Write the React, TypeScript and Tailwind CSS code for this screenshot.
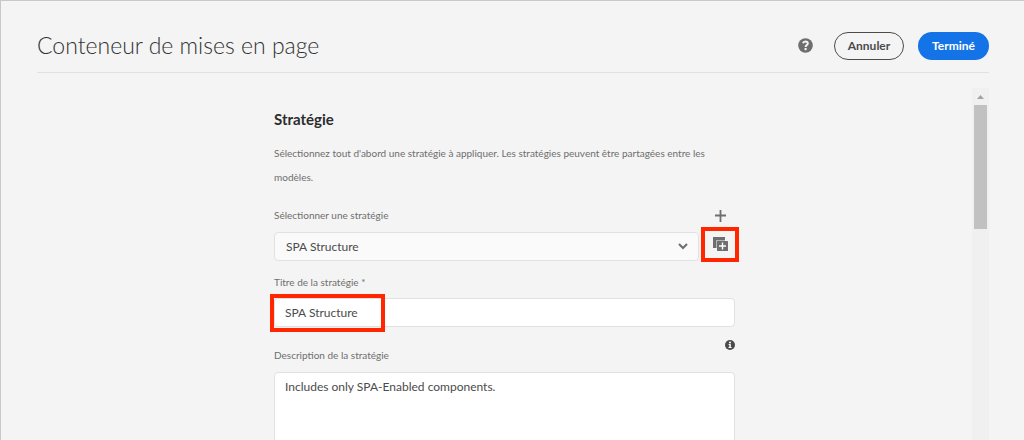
import React from "react";

function HelpIcon() {
  return (
    <svg width="15" height="15" viewBox="0 0 15 15" aria-hidden="true">
      <circle cx="7.5" cy="7.5" r="7.3" fill="#6e6e6e" />
      <path
        d="M5 5.300C5.300 4.100 6.300 3.500 7.500 3.500c1.400 0 2.300.8 2.300 1.900 0 1.700-2.200 1.700-2.200 3.700"
        fill="none"
        stroke="#f4f4f4"
        strokeWidth="2"
      />
      <rect x="6.500" y="10" width="2.200" height="2.200" rx=".6" fill="#f4f4f4" />
    </svg>
  );
}

function InfoIcon() {
  return (
    <svg width="10" height="10" viewBox="0 0 10 10" aria-hidden="true">
      <circle cx="5" cy="5" r="5" fill="#4b4b4b" />
      <circle cx="5" cy="2.400" r="1" fill="#fff" />
      <path d="M3.600 4.100h2.200v3h.8v1H3.500v-1h.8V5h-.7z" fill="#fff" />
    </svg>
  );
}

function AddIcon() {
  return (
    <svg width="12" height="12" viewBox="0 0 12 12" aria-hidden="true">
      <path d="M5.500 0v12M0 5.500h11" stroke="#6e6e6e" strokeWidth="1.800" />
    </svg>
  );
}

function DuplicateIcon() {
  return (
    <svg width="16" height="15" viewBox="0 0 16 15" aria-hidden="true">
      <path d="M0 0h12v3H3v8H0z" fill="#6e6e6e" />
      <path d="M3 3h9v1H4v7H3z" fill="#b4b4b4" />
      <rect x="4" y="4" width="11" height="10" rx=".5" fill="#6e6e6e" />
      <path d="M9.500 5.500v7M6 9h7" stroke="#fff" strokeWidth="1.400" />
    </svg>
  );
}

function Highlight({ className }: { className: string }) {
  return (
    <div
      className={`pointer-events-none absolute border-4 border-[#ff2600] ${className}`}
    />
  );
}

const label = "block text-[10px] leading-4 text-[#6e6e6e]";
const field =
  "block w-full rounded border border-[#e1e1e1] text-xs text-[#4b4b4b] outline-none";

export default function App() {
  return (
    <div className="flex h-screen flex-col overflow-hidden border-t border-l border-[#c8c8c8] bg-[#f4f4f4] pr-[35px] pl-9 font-['Lato','Open_Sans',sans-serif]">
      <header className="flex h-[72px] shrink-0 items-center border-b border-[#e1e1e1] pt-5 pb-1">
        <h1 className="flex-1 text-[23px] leading-8 font-light text-[#323232]">
          Conteneur de mises en page
        </h1>
        <div className="flex items-center pt-0.5">
          <button type="button" aria-label="Aide" className="mr-[21px]">
            <HelpIcon />
          </button>
          <button
            type="button"
            className="mr-3.5 h-7 w-[70px] rounded-full border border-[#4b4b4b] text-xs font-bold text-[#4b4b4b]"
          >
            Annuler
          </button>
          <button
            type="button"
            className="h-7 w-[71px] rounded-full bg-[#1473e6] text-xs font-bold text-white"
          >
            Terminé
          </button>
        </div>
      </header>

      <div className="mt-[15px] flex min-h-0 flex-1">
        <main className="min-w-0 flex-1 overflow-hidden">
          <form className="mx-auto w-full max-w-[461px] pt-[19px]">
            <h2 className="text-[15px] leading-6 font-bold text-[#2c2c2c]">
              Stratégie
            </h2>
            <p className="mt-2.5 text-[10px] leading-6 text-[#6e6e6e]">
              Sélectionnez tout d'abord une stratégie à appliquer. Les
              stratégies peuvent être partagées entre les modèles.
            </p>

            <div className="mt-[18px] flex">
              <div className="min-w-0 flex-1">
                <label htmlFor="policy" className={label}>
                  Sélectionner une stratégie
                </label>
                <div className="relative mt-[9px]">
                  <select
                    id="policy"
                    className={`${field} h-[29px] appearance-none bg-[#fafafa] px-[11px]`}
                  >
                    <option>SPA Structure</option>
                  </select>
                  <svg
                    className="pointer-events-none absolute top-[11px] right-[11px]"
                    width="10"
                    height="7"
                    viewBox="0 0 10 7"
                    aria-hidden="true"
                  >
                    <path
                      d="M1 1l4 4 4-4"
                      fill="none"
                      stroke="#6e6e6e"
                      strokeWidth="2"
                    />
                  </svg>
                </div>
              </div>
              <div className="flex w-9 flex-col items-center pt-[3px] pl-2">
                <button type="button" aria-label="Ajouter">
                  <AddIcon />
                </button>
                <button
                  type="button"
                  aria-label="Dupliquer"
                  className="relative mt-[15px]"
                >
                  <DuplicateIcon />
                  <Highlight className="-top-2.5 -left-3 h-[35px] w-[38px]" />
                </button>
              </div>
            </div>

            <label htmlFor="title" className={`${label} mt-[13px]`}>
              Titre de la stratégie *
            </label>
            <div className="relative mt-2">
              <input
                id="title"
                type="text"
                defaultValue="SPA Structure"
                className={`${field} h-[29px] bg-white px-2.5`}
              />
              <Highlight className="-top-1 -left-1 h-[38px] w-[115px]" />
            </div>

            <div className="mt-[13px] flex items-start justify-between">
              <label htmlFor="description" className={`${label} mt-[7px]`}>
                Description de la stratégie
              </label>
              <button type="button" aria-label="Informations">
                <InfoIcon />
              </button>
            </div>
            <textarea
              id="description"
              defaultValue="Includes only SPA-Enabled components."
              className={`${field} mt-[9px] h-28 resize-none bg-white px-2.5 py-1.5`}
            />
          </form>
        </main>
        <div
          aria-hidden="true"
          className="flex w-[17px] shrink-0 flex-col items-center bg-[#f0f0f0]"
        >
          <svg width="17" height="17" viewBox="0 0 17 17">
            <path d="M5 11l3.500-4 3.500 4z" fill="#a3a3a3" />
          </svg>
          <div className="h-[124px] w-[13px] bg-[#c1c1c1]" />
        </div>
      </div>
    </div>
  );
}
